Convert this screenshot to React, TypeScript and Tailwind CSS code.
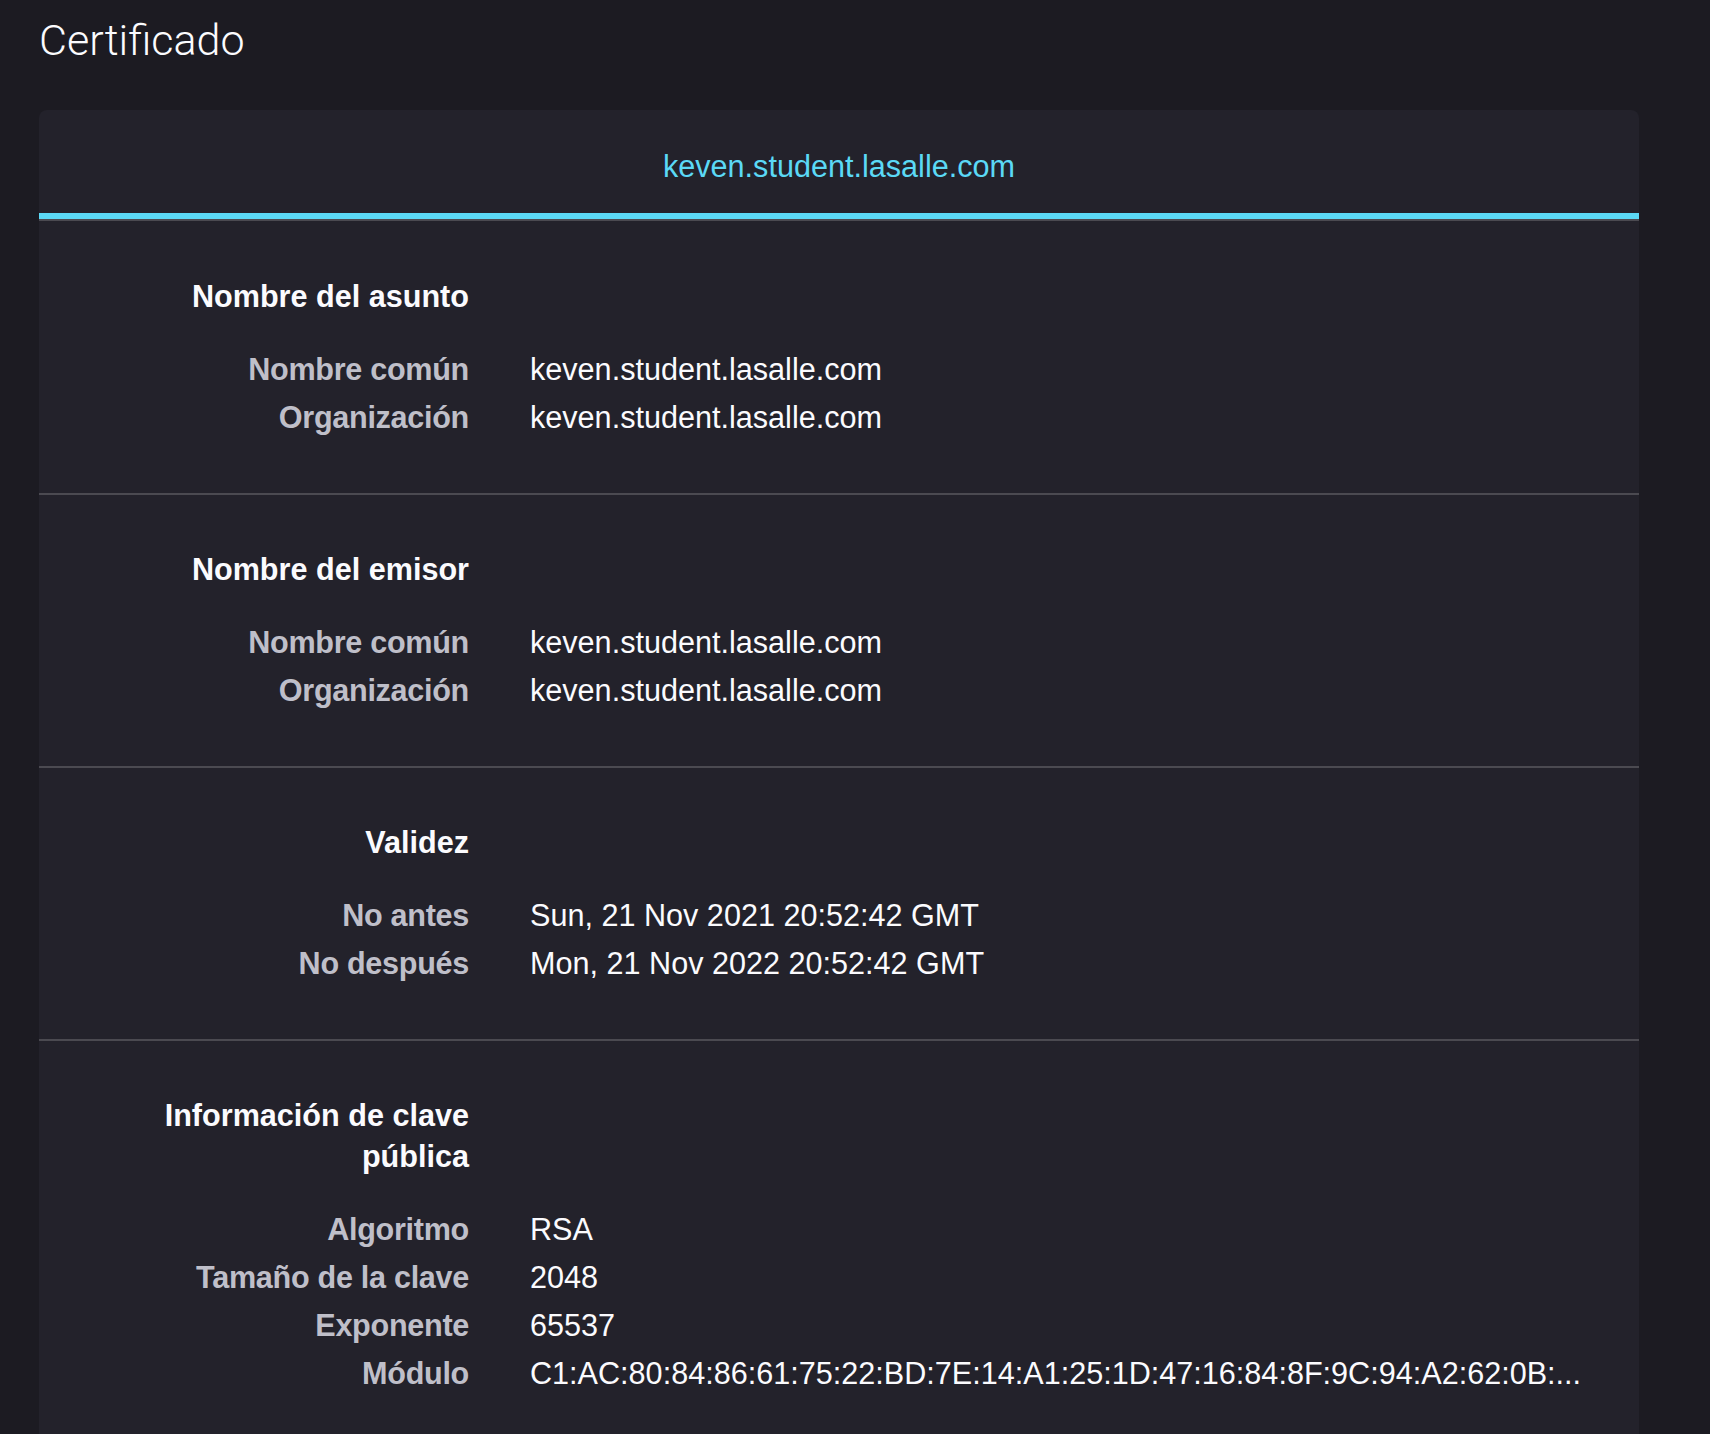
import React from 'react';

interface Field {
  label: string;
  value: string;
}

interface Section {
  title: string;
  fields: Field[];
}

const host = 'keven.student.lasalle.com';

const sections: Section[] = [
  {
    title: 'Nombre del asunto',
    fields: [
      { label: 'Nombre común', value: host },
      { label: 'Organización', value: host },
    ],
  },
  {
    title: 'Nombre del emisor',
    fields: [
      { label: 'Nombre común', value: host },
      { label: 'Organización', value: host },
    ],
  },
  {
    title: 'Validez',
    fields: [
      { label: 'No antes', value: 'Sun, 21 Nov 2021 20:52:42 GMT' },
      { label: 'No después', value: 'Mon, 21 Nov 2022 20:52:42 GMT' },
    ],
  },
  {
    title: 'Información de clave pública',
    fields: [
      { label: 'Algoritmo', value: 'RSA' },
      { label: 'Tamaño de la clave', value: '2048' },
      { label: 'Exponente', value: '65537' },
      {
        label: 'Módulo',
        value: 'C1:AC:80:84:86:61:75:22:BD:7E:14:A1:25:1D:47:16:84:8F:9C:94:A2:62:0B:...',
      },
    ],
  },
];

export default function App() {
  return (
    <div className="min-h-screen bg-[#1c1b22] pl-[39px] pr-[71px] pt-[14px] font-['Liberation_Sans',Arial,sans-serif] text-[30.6px]">
      <h1 className="font-['Roboto',sans-serif] font-light text-[43px] leading-[52px] text-[#fbfbfe]">
        Certificado
      </h1>

      <div className="mt-[44px] rounded-t-lg bg-[#23222b]">
        {/* tab bar */}
        <div className="border-b-2 border-[#4b4a51]">
          <div className="border-b-[6px] border-[#5bd9f6] pt-[36px] pb-[26px] text-center leading-[41px] text-[#5bd9f6]">
            {host}
          </div>
        </div>

        {sections.map((section, i) => (
          <div
            key={section.title}
            className={i > 0 ? 'pt-[54px] pb-[52px] pl-[90px] border-t-2 border-[#4b4a51]' : 'pt-[55px] pb-[52px] pl-[90px]'}
          >
            <div className="grid grid-cols-[340px_1fr] gap-x-[61px]">
              <h2 className="text-right font-bold leading-[41px] text-[#fbfbfe] mb-[28px]">
                {section.title}
              </h2>
              <div />
              {section.fields.map((field) => (
                <React.Fragment key={field.label}>
                  <div className="text-right font-semibold tracking-[-0.3px] leading-[48px] text-[#bfbfc9] whitespace-nowrap">
                    {field.label}
                  </div>
                  <div className="leading-[48px] text-[#fbfbfe] whitespace-nowrap">{field.value}</div>
                </React.Fragment>
              ))}
            </div>
          </div>
        ))}
      </div>
    </div>
  );
}
